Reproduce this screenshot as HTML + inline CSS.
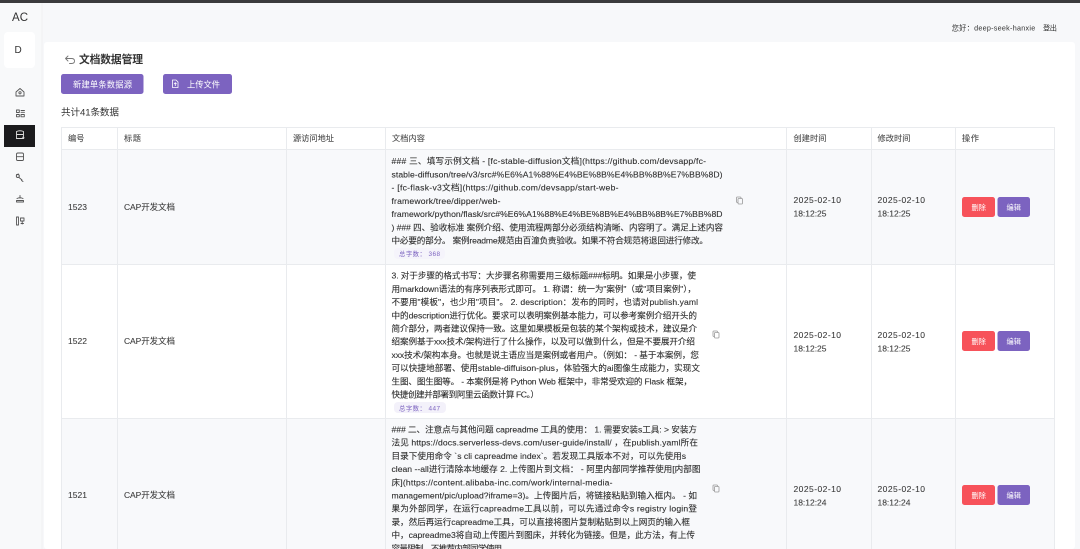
<!DOCTYPE html>
<html lang="zh"><head><meta charset="utf-8"><title>文档数据管理</title>
<style>
html,body{margin:0;padding:0;width:1080px;height:549px;overflow:hidden;background:#f7f8fa}
svg{display:block;filter:blur(.3px)}
text{font-family:"Liberation Sans","Noto Sans CJK SC",sans-serif;fill:#333;white-space:pre}
.b{font-size:8.6px;fill:#2e2e2e;stroke:#2e2e2e;stroke-width:.1px}
.h{font-size:8.2px;fill:#4a4a4a;stroke:#4a4a4a;stroke-width:.08px}
.c{font-size:8.5px;fill:#3a3a3a;stroke:#3a3a3a;stroke-width:.08px}
.w{font-size:7.2px;fill:#fff}
.cnt{font-size:6.4px;fill:#7c63c0}
.ic{fill:none;stroke:#555;stroke-width:.9;stroke-linecap:round;stroke-linejoin:round}
</style></head><body>
<svg width="1080" height="549" viewBox="0 0 1080 549" xmlns="http://www.w3.org/2000/svg">
<rect width="1080" height="549" fill="#f7f8fa"/>
<rect width="1080" height="3" fill="#3b3b3d"/>
<rect x="0" y="3" width="42" height="546" fill="#f8f9fa"/>
<rect x="41.5" y="3" width="1" height="546" fill="#f0f1f3"/>
<rect x="44" y="42" width="1031" height="507" rx="3" fill="#fff"/>

<text x="12" y="21" font-size="11.5" fill="#222" textLength="16">AC</text>
<rect x="4" y="32" width="31" height="36" rx="4" fill="#fff"/>
<text x="14.5" y="53" font-size="10" fill="#333">D</text>
<rect x="4" y="125" width="31" height="22" fill="#1b1b1d"/>

<g class="ic">
<path d="M16 92l4-3.500 4 3.500v4h-8z"/><circle cx="20" cy="92.800" r="1.100"/>
<path d="M16.500 110h2.800v2.500h-2.800zM21 110.500h3.500M21 112.300h3.500M16.500 114.500h2.800v2.300h-2.800zM21 114.500h3.300v2.300H21z"/>
<rect x="16.500" y="153" width="7" height="7.500" rx="1.300"/><path d="M16.500 156.700h7"/>
<circle cx="17.800" cy="176" r="1.500"/><path d="M19 177.500l3 2.500M16.500 174.500l2-.5M21.500 180.500l1.500 1"/>
<path d="M20 195.500v2.500M17 198.500q3-1.500 6 0M16.500 200.500h7v1.500h-7z"/>
<path d="M16.500 217v8h2v-8zM20.500 218h3.500v3h-3.500zM21 223.500h2.500M22.200 221v3"/>
</g>
<path d="M16.500 131.500q3.500-1.500 7 0v7h-7zM16.500 134.500h7M22 137l2.500 1" fill="none" stroke="#ddd" stroke-width=".9"/>

<path d="M68 56l-2.500 2.500 2.500 2.500M66 58.500h5.500q3 0 3 2.500t-3 2.500h-2" fill="none" stroke="#777" stroke-width=".9" stroke-linecap="round" stroke-linejoin="round"/>
<text x="79" y="63" font-size="10.800" font-weight="700" fill="#222" textLength="64">文档数据管理</text>

<rect x="61" y="74" width="82.500" height="20" rx="2.500" fill="#7c63c0"/>
<text x="73" y="87.500" class="w" style="font-size:8.300px" textLength="59">新建单条数据源</text>
<rect x="163" y="74" width="69" height="20" rx="2.500" fill="#7c63c0"/>
<path d="M172.500 80h3.500l2 2v5.500h-5.500zM175.300 86v-3M174 84l1.300-1.300 1.300 1.300" fill="none" stroke="#fff" stroke-width=".8"/>
<text x="187" y="87.500" class="w" style="font-size:8.300px" textLength="33">上传文件</text>

<text x="61" y="115.500" font-size="9.600" fill="#3a3a3a" textLength="58">共计41条数据</text>

<!-- table -->
<rect x="61" y="149" width="994" height="115" fill="#f8f9fb"/>
<rect x="61" y="418" width="994" height="131" fill="#f8f9fb"/>
<g stroke="#e9ebee" stroke-width="1" fill="none">
<path d="M61 127.500H1055M61 149.500H1055M61 264.500H1055M61 418.500H1055"/>
<path d="M61.500 127V549M117.500 127V549M286.500 127V549M385.500 127V549M786.500 127V549M871.500 127V549M955.500 127V549M1054.500 127V549"/>
</g>
<text x="68" y="141" class="h" textLength="16.500">编号</text>
<text x="124" y="141" class="h" textLength="17">标题</text>
<text x="293" y="141" class="h" textLength="41">源访问地址</text>
<text x="392" y="141" class="h" textLength="33">文档内容</text>
<text x="793.500" y="141" class="h" textLength="33">创建时间</text>
<text x="877.500" y="141" class="h" textLength="33">修改时间</text>
<text x="962" y="141" class="h" textLength="17">操作</text>

<!-- row 1 -->
<text x="68" y="210" class="c" textLength="19">1523</text>
<text x="124" y="210" class="c" textLength="51">CAP开发文档</text>
<text x="391.500" y="164" class="b" textLength="314.500">### 三、填写示例文档 - [fc-stable-diffusion文档](https://github.com/devsapp/fc-</text>
<text x="391.500" y="177.300" class="b" textLength="331">stable-diffuson/tree/v3/src#%E6%A1%88%E4%BE%8B%E4%BB%8B%E7%BB%8D)</text>
<text x="391.500" y="190.600" class="b" textLength="227">- [fc-flask-v3文档](https://github.com/devsapp/start-web-</text>
<text x="391.500" y="203.800" class="b" textLength="109">framework/tree/dipper/web-</text>
<text x="391.500" y="217" class="b" textLength="331">framework/python/flask/src#%E6%A1%88%E4%BE%8B%E4%BB%8B%E7%BB%8D</text>
<text x="391.500" y="230.300" class="b" textLength="331.500">) ### 四、验收标准 案例介绍、使用流程两部分必须结构清晰、内容明了。满足上述内容</text>
<text x="391.500" y="243.500" class="b" textLength="316.500">中必要的部分。 案例readme规范由百潼负责验收。如果不符合规范将退回进行修改。</text>
<rect x="394" y="248" width="51" height="11" rx="4" fill="#f5f4fb"/>
<text x="399" y="256" class="cnt" textLength="41">总字数： 368</text>
<g fill="none" stroke="#999" stroke-width=".8"><rect x="736.500" y="197" width="4.500" height="5.500" rx=".8"/><rect x="738" y="198.500" width="4.500" height="5.500" rx=".8" fill="#f8f9fb"/></g>
<text x="793.500" y="203" class="c" textLength="47.500">2025-02-10</text>
<text x="793.500" y="216.300" class="c" textLength="33">18:12:25</text>
<text x="877.500" y="203" class="c" textLength="47.500">2025-02-10</text>
<text x="877.500" y="216.300" class="c" textLength="33">18:12:25</text>
<rect x="962" y="197" width="33" height="20" rx="2.500" fill="#f7525a"/><text x="971.500" y="210" class="w" textLength="14.500">删除</text>
<rect x="997.500" y="197" width="32.500" height="20" rx="2.500" fill="#7c63c0"/><text x="1006.500" y="210" class="w" textLength="14.500">编辑</text>

<!-- row 2 -->
<text x="68" y="344" class="c" textLength="19">1522</text>
<text x="124" y="344" class="c" textLength="51">CAP开发文档</text>
<text x="391.500" y="278.700" class="b" textLength="304.500">3. 对于步骤的格式书写：大步骤名称需要用三级标题###标明。如果是小步骤，使</text>
<text x="391.500" y="291.900" class="b" textLength="304.500">用markdown语法的有序列表形式即可。 1. 称谓：统一为"案例"（或"项目案例"），</text>
<text x="391.500" y="305.100" class="b" textLength="306.500">不要用"模板"，也少用"项目"。 2. description：发布的同时，也请对publish.yaml</text>
<text x="391.500" y="318.300" class="b" textLength="305.500">中的description进行优化。要求可以表明案例基本能力，可以参考案例介绍开头的</text>
<text x="391.500" y="331.500" class="b" textLength="305.500">简介部分，两者建议保持一致。这里如果模板是包装的某个架构或技术，建议是介</text>
<text x="391.500" y="344.700" class="b" textLength="303.500">绍案例基于xxx技术/架构进行了什么操作，以及可以做到什么，但是不要展开介绍</text>
<text x="391.500" y="357.900" class="b" textLength="307.500">xxx技术/架构本身。也就是说主语应当是案例或者用户。（例如： - 基于本案例，您</text>
<text x="391.500" y="371.100" class="b" textLength="308.500">可以快捷地部署、使用stable-diffuison-plus，体验强大的ai图像生成能力，实现文</text>
<text x="391.500" y="384.300" class="b" textLength="300.500">生图、图生图等。 - 本案例是将 Python Web 框架中，非常受欢迎的 Flask 框架，</text>
<text x="391.500" y="397.500" class="b" textLength="147.500">快捷创建并部署到阿里云函数计算 FC。）</text>
<rect x="394" y="402" width="52" height="11" rx="4" fill="#f3f1fa"/>
<text x="399" y="410.500" class="cnt" textLength="41">总字数： 447</text>
<g fill="none" stroke="#999" stroke-width=".8"><rect x="713" y="331" width="4.500" height="5.500" rx=".8"/><rect x="714.500" y="332.500" width="4.500" height="5.500" rx=".8" fill="#fff"/></g>
<text x="793.500" y="338" class="c" textLength="47.500">2025-02-10</text>
<text x="793.500" y="351.300" class="c" textLength="33">18:12:25</text>
<text x="877.500" y="338" class="c" textLength="47.500">2025-02-10</text>
<text x="877.500" y="351.300" class="c" textLength="33">18:12:25</text>
<rect x="962" y="331" width="33" height="20" rx="2.500" fill="#f7525a"/><text x="971.500" y="344" class="w" textLength="14.500">删除</text>
<rect x="997.500" y="331" width="32.500" height="20" rx="2.500" fill="#7c63c0"/><text x="1006.500" y="344" class="w" textLength="14.500">编辑</text>

<!-- row 3 -->
<text x="68" y="498" class="c" textLength="19">1521</text>
<text x="124" y="498" class="c" textLength="51">CAP开发文档</text>
<text x="391.500" y="432.500" class="b" textLength="305.500">### 二、注意点与其他问题 capreadme 工具的使用： 1. 需要安装s工具: &gt; 安装方</text>
<text x="391.500" y="445.700" class="b" textLength="306.500">法见 https://docs.serverless-devs.com/user-guide/install/ ，在publish.yaml所在</text>
<text x="391.500" y="458.900" class="b" textLength="294.500">目录下使用命令 `s cli capreadme index`。若发现工具版本不对，可以先使用s</text>
<text x="391.500" y="472.100" class="b" textLength="309">clean --all进行清除本地缓存 2. 上传图片到文档： - 阿里内部同学推荐使用[内部图</text>
<text x="391.500" y="485.300" class="b" textLength="221">床](https://content.alibaba-inc.com/work/internal-media-</text>
<text x="391.500" y="498.500" class="b" textLength="305.500">management/pic/upload?iframe=3)。上传图片后，将链接粘贴到输入框内。 - 如</text>
<text x="391.500" y="511.700" class="b" textLength="305.500">果为外部同学，在运行capreadme工具以前，可以先通过命令s registry login登</text>
<text x="391.500" y="524.900" class="b" textLength="298.500">录，然后再运行capreadme工具，可以直接将图片复制粘贴到以上网页的输入框</text>
<text x="391.500" y="538.100" class="b" textLength="303.500">中，capreadme3将自动上传图片到图床，并转化为链接。但是，此方法，有上传</text>
<text x="391.500" y="551.300" class="b" textLength="118.500">容量限制，不推荐内部同学使用。</text>
<g fill="none" stroke="#999" stroke-width=".8"><rect x="713" y="485" width="4.500" height="5.500" rx=".8"/><rect x="714.500" y="486.500" width="4.500" height="5.500" rx=".8" fill="#f8f9fb"/></g>
<text x="793.500" y="492" class="c" textLength="47.500">2025-02-10</text>
<text x="793.500" y="505.300" class="c" textLength="33">18:12:24</text>
<text x="877.500" y="492" class="c" textLength="47.500">2025-02-10</text>
<text x="877.500" y="505.300" class="c" textLength="33">18:12:24</text>
<rect x="962" y="485" width="33" height="20" rx="2.500" fill="#f7525a"/><text x="971.500" y="498" class="w" textLength="14.500">删除</text>
<rect x="997.500" y="485" width="32.500" height="20" rx="2.500" fill="#7c63c0"/><text x="1006.500" y="498" class="w" textLength="14.500">编辑</text>

<!-- user -->
<text x="951.700" y="30.500" font-size="7.200" fill="#444" textLength="83.500">您好：deep-seek-hanxie</text>
<text x="1043" y="30.500" font-size="7.200" fill="#444" textLength="14">登出</text>
</svg>
</body></html>
